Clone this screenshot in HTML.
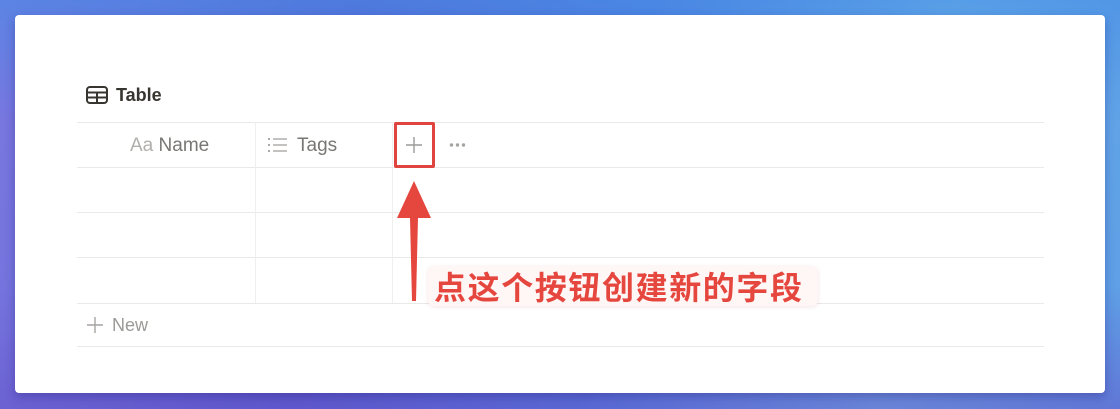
<!DOCTYPE html>
<html><head><meta charset="utf-8"><style>
*{margin:0;padding:0;box-sizing:border-box}
body{width:1120px;height:409px;overflow:hidden;position:relative;font-family:"Liberation Sans","Noto Sans CJK SC",sans-serif;
background:linear-gradient(100deg,#7a78e0 0%,#5a5fd0 30%,#4f7fe0 55%,#6fb8e8 80%,#5d9de6 100%);}
.bg2{position:absolute;inset:0;background:linear-gradient(180deg,rgba(70,140,230,.6) 0%,rgba(0,0,0,0) 30%,rgba(0,0,0,0) 70%,rgba(100,80,200,.5) 100%)}
.card{position:absolute;left:15px;top:15px;width:1090px;height:378px;background:#fff;border-radius:4px;box-shadow:0 4px 10px rgba(40,30,120,.35)}
.h{position:absolute;height:1px;background:#e9e9e7;left:77px;width:967px}
.v{position:absolute;width:1px;background:#efefed;top:122px;height:181px}
.t{position:absolute;color:#787774;font-size:19px}
</style></head><body><div class="bg2"></div>
<div class="card"></div>
<svg style="position:absolute;left:86px;top:86px" width="22" height="18" viewBox="0 0 22 18"><rect x="1" y="1" width="20" height="16" rx="3" fill="none" stroke="#37352f" stroke-width="2"/><line x1="1" y1="6.5" x2="21" y2="6.5" stroke="#37352f" stroke-width="2"/><line x1="1" y1="11.5" x2="21" y2="11.5" stroke="#37352f" stroke-width="2"/><line x1="11" y1="6" x2="11" y2="17" stroke="#37352f" stroke-width="2"/></svg>
<div style="position:absolute;left:116px;top:85px;font-size:18px;font-weight:bold;color:#37352f">Table</div>
<div class="h" style="top:122px"></div><div class="h" style="top:167px"></div><div class="h" style="top:212px"></div><div class="h" style="top:257px"></div><div class="h" style="top:303px"></div><div class="h" style="top:346px"></div>
<div class="v" style="left:255px"></div><div class="v" style="left:392px"></div>
<div class="t" style="left:130px;top:135px"><span style="color:#b0afab">Aa</span> Name</div>
<svg style="position:absolute;left:268px;top:137px" width="20" height="16" viewBox="0 0 20 16"><g fill="#aaa9a5"><rect x="0" y="1" width="2" height="2"/><rect x="0" y="7" width="2" height="2"/><rect x="0" y="13" width="2" height="2"/><rect x="5" y="1.3" width="14" height="1.4"/><rect x="5" y="7.3" width="14" height="1.4"/><rect x="5" y="13.3" width="14" height="1.4"/></g></svg>
<div class="t" style="left:297px;top:135px">Tags</div>
<div style="position:absolute;left:394px;top:122px;width:41px;height:46px;border:3px solid #e0443e;border-radius:2px"></div>
<svg style="position:absolute;left:405px;top:136px" width="18" height="18"><path d="M9 1V17M1 9H17" stroke="#9b9a97" stroke-width="1.4"/></svg>
<svg style="position:absolute;left:449px;top:142px" width="18" height="6"><g fill="#a5a4a0"><circle cx="2.5" cy="3" r="1.7"/><circle cx="8.5" cy="3" r="1.7"/><circle cx="14.5" cy="3" r="1.7"/></g></svg>
<svg style="position:absolute;left:395px;top:180px" width="40" height="124"><path d="M19 1L36 38H23L21 121H17L15 38H2Z" fill="#e5473f"/></svg>
<div style="position:absolute;left:428px;top:266px;width:390px;height:40px;background:rgba(255,246,246,.95);border-radius:6px;box-shadow:0 1px 4px rgba(200,120,120,.2)"></div>
<div style="position:absolute;left:434px;top:266px;font-size:32px;font-weight:bold;color:#e5473f;line-height:40px;font-family:'Noto Sans CJK SC',sans-serif;letter-spacing:1.6px;white-space:nowrap">点这个按钮创建新的字段</div>
<svg style="position:absolute;left:86px;top:316px" width="18" height="18"><path d="M9 1V17M1 9H17" stroke="#a5a4a0" stroke-width="1.4"/></svg>
<div class="t" style="left:112px;top:315px;color:#9b9a97;font-size:18px">New</div>
</body></html>
